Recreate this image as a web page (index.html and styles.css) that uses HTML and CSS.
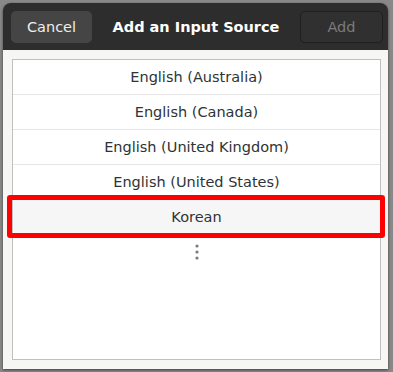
FILE: index.html
```html
<!DOCTYPE html>
<html lang="en">

<head>
    <meta charset="UTF-8">
    <meta name="viewport" content="width=device-width, initial-scale=1.0">
    <title>Add an Input Source</title>
    <link rel="stylesheet" href="styles.css">
</head>

<body>
    <div class="dialog">
        <header class="headerbar">
            <button class="btn cancel">Cancel</button>
            <h1 class="title">Add an Input Source</h1>
            <button class="btn add" disabled>Add</button>
        </header>

        <div class="content">
            <ul class="sources">
                <li>English (Australia)</li>
                <li>English (Canada)</li>
                <li>English (United Kingdom)</li>
                <li>English (United States)</li>
                <li class="highlight">Korean</li>
                <li class="more">
                    <svg width="4" height="16" viewBox="0 0 4 16">
                        <circle cx="2" cy="2" r="1.6" fill="#7b7b7b" />
                        <circle cx="2" cy="8" r="1.6" fill="#7b7b7b" />
                        <circle cx="2" cy="14" r="1.6" fill="#7b7b7b" />
                    </svg>
                </li>
            </ul>
        </div>
    </div>
</body>

</html>
```

FILE: styles.css
```css
body {
    margin: 0;
    height: 372px;
    background-color: #898989;
    font-family: "DejaVu Sans", sans-serif;
    font-size: 14.5px;
    overflow: hidden;
}

.dialog {
    margin: 3px 5px 0 3px;
    height: 366px;
    display: flex;
    flex-direction: column;
    border-radius: 8px 8px 0 0;
    overflow: hidden;
    box-shadow: 0 1px 3px rgba(0, 0, 0, 0.55);
}

.headerbar {
    height: 47px;
    box-sizing: border-box;
    padding: 8px 5px 0 8px;
    background-color: #2d2d2d;
    display: flex;
    align-items: flex-start;
}

.btn {
    height: 32px;
    font-family: inherit;
    font-size: 14.5px;
    border-radius: 5px;
    padding: 0;
}

.cancel {
    width: 81px;
    background-color: #454545;
    color: #eeeeec;
    border: none;
}

.add {
    width: 83px;
    margin-top: -0.5px;
    background-color: #2f302f;
    color: #7b7b7b;
    border: 1px solid #1e1f1e;
}

.title {
    flex: 1;
    margin: 0;
    line-height: 32px;
    text-align: center;
    font-size: 14.5px;
    font-weight: bold;
    color: #fff;
}

.content {
    flex: 1;
    background-color: #f6f6f5;
    padding: 9px 7px 9px 9px;
    display: flex;
}

.sources {
    flex: 1;
    margin: 0;
    padding: 0;
    list-style: none;
    background-color: #fff;
    border: 1px solid #c0c0c0;
}

.sources li {
    position: relative;
    height: 34px;
    line-height: 34px;
    text-align: center;
    color: #2e3436;
    border-bottom: 1px solid #e6e6e6;
}

.sources li.highlight {
    background-color: #f6f6f6;
    border-bottom: none;
}

.highlight::after {
    content: "";
    position: absolute;
    top: -5px;
    bottom: -4px;
    left: -6px;
    right: -5px;
    border: 5px solid #ff0000;
    border-radius: 3px;
}

.sources li.more {
    border-bottom: none;
    height: auto;
    line-height: 0;
    padding-top: 10px;
}
```
